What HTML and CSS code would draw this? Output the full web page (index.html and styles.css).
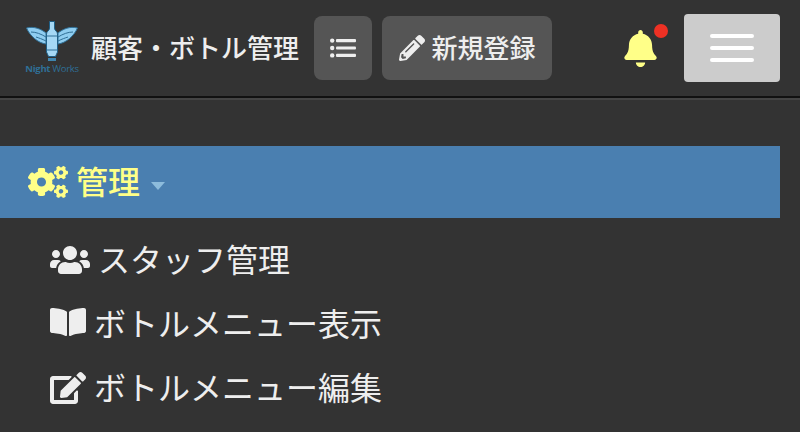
FILE: index.html
```html
<!DOCTYPE html>
<html lang="ja">
<head>
    <meta charset="UTF-8">
    <meta name="viewport" content="width=device-width, initial-scale=1.0">
    <title>顧客・ボトル管理</title>
    <link rel="stylesheet" href="styles.css">
</head>
<body>
    <header class="topbar">
        <div class="logo">
            <svg class="logo-mark" viewBox="0 0 52 41">
                <path class="wing" d="M.5 7 C8 5 15 8 20 12 L20 23 C12 22 4 15 .5 7 Z"/>
                <path class="wing" d="M51.5 7 C44 5 37 8 32 12 L32 23 C40 22 48 15 51.5 7 Z"/>
                <path class="wing-line" d="M5 11 C10 11 15 13 20 16 M10 16 C13 17 16 18 20 20 M47 11 C42 11 37 13 32 16 M42 16 C39 17 36 18 32 20"/>
                <path class="bottle" d="M23.5 .5 H28.5 V7 C28.5 10 31.5 10 31.5 13 V31 L29.5 35.5 H22.5 L20.5 31 V13 C20.5 10 23.5 10 23.5 7 Z"/>
                <path class="wing-line" d="M20.5 15 H31.5 M20.5 29 H31.5"/>
                <path class="bottle-foot" d="M22 37 H30 V40 H22 Z"/>
            </svg>
            <span class="logo-text"><b>Night</b> Works</span>
        </div>
        <h1 class="title">顧客・ボトル管理</h1>
        <a class="tool-btn tool-list" href="#">
            <svg class="icon-list" viewBox="0 0 26 20">
                <circle cx="2.2" cy="2.6" r="2.2"/><circle cx="2.2" cy="10" r="2.2"/><circle cx="2.2" cy="17.4" r="2.2"/>
                <rect x="6" y="1" width="20" height="3.2" rx="1"/><rect x="6" y="8.4" width="20" height="3.2" rx="1"/><rect x="6" y="15.8" width="20" height="3.2" rx="1"/>
            </svg>
        </a>
        <a class="tool-btn tool-new" href="#">
            <svg class="icon-pencil" viewBox="0 0 512 512"><path d="M497.9 142.1l-46.1 46.1c-4.7 4.7-12.3 4.7-17 0l-111-111c-4.7-4.7-4.7-12.3 0-17l46.1-46.1c18.7-18.7 49.1-18.7 67.9 0l60.1 60.1c18.8 18.7 18.8 49.1 0 67.9zM284.2 99.8L21.6 362.4.4 483.9c-2.9 16.4 11.4 30.6 27.8 27.7l121.5-21.3 262.6-262.6c4.7-4.7 4.7-12.3 0-17l-111-111c-4.8-4.7-12.4-4.7-17.1.1zM124.1 339.9c-5.5-5.5-5.5-14.3 0-19.8l154-154c5.5-5.5 14.3-5.5 19.8 0s5.5 14.3 0 19.8l-154 154c-5.5 5.5-14.3 5.5-19.8 0zM88 424h48v36.3l-64.5 11.3-31.1-31.1L51.7 376H88v48z"/></svg>
            <span class="label">新規登録</span>
        </a>
        <div class="bell">
            <svg class="icon-bell" viewBox="0 0 448 512"><path d="M224 512c35.32 0 63.97-28.65 63.97-64H160.03c0 35.35 28.65 64 63.97 64zm215.39-149.71c-19.32-20.76-55.47-51.99-55.47-154.29 0-77.7-54.48-139.9-127.94-155.16V32c0-17.67-14.32-32-31.98-32s-31.98 14.33-31.98 32v20.84C118.56 68.1 64.08 130.3 64.08 208c0 102.3-36.15 133.53-55.47 154.29-6 6.45-8.66 14.16-8.61 21.71.11 16.4 12.98 32 32.1 32h383.8c19.12 0 32-15.6 32.1-32 .05-7.55-2.61-15.27-8.61-21.71z"/></svg>
            <span class="bell-dot"></span>
        </div>
        <button class="burger" type="button">
            <span></span><span></span><span></span>
        </button>
    </header>

    <nav class="menu">
        <div class="menu-head">
            <svg class="icon-cogs" viewBox="0 0 640 512"><path d="M512.1 191l-8.2 14.3c-3 5.3-9.4 7.5-15.1 5.4-11.8-4.4-22.6-10.7-32.1-18.6-4.6-3.8-5.8-10.5-2.8-15.7l8.2-14.3c-6.9-8-12.3-17.3-15.9-27.4h-16.5c-6 0-11.2-4.3-12.2-10.3-2-12-2.1-24.6 0-37.1 1-6 6.2-10.4 12.2-10.4h16.5c3.6-10.1 9-19.4 15.9-27.4l-8.2-14.3c-3-5.2-1.9-11.9 2.8-15.7 9.5-7.9 20.4-14.2 32.1-18.6 5.7-2.1 12.1.1 15.1 5.4l8.2 14.3c10.5-1.9 21.2-1.9 31.7 0L552 6.3c3-5.3 9.4-7.5 15.1-5.4 11.8 4.4 22.6 10.7 32.1 18.6 4.6 3.8 5.8 10.5 2.8 15.7l-8.2 14.3c6.9 8 12.3 17.3 15.9 27.4h16.5c6 0 11.2 4.3 12.2 10.3 2 12 2.1 24.6 0 37.1-1 6-6.2 10.4-12.2 10.4h-16.5c-3.6 10.1-9 19.4-15.9 27.4l8.2 14.3c3 5.2 1.9 11.9-2.8 15.7-9.5 7.9-20.4 14.2-32.1 18.6-5.7 2.1-12.1-.1-15.1-5.4l-8.2-14.3c-10.4 1.9-21.2 1.9-31.7 0zm-10.5-58.8c38.5 29.6 82.4-14.3 52.8-52.8-38.5-29.7-82.4 14.3-52.8 52.8zM386.3 286.1l33.7 16.8c10.1 5.8 14.5 18.1 10.5 29.1-8.9 24.2-26.4 46.4-42.6 65.8-7.4 8.9-20.2 11.1-30.3 5.3l-29.1-16.8c-16 13.7-34.6 24.6-54.9 31.7v33.6c0 11.6-8.3 21.6-19.7 23.6-24.6 4.2-50.4 4.4-75.9 0-11.5-2-20-11.9-20-23.6V418c-20.3-7.2-38.9-18-54.9-31.7L74 403c-10 5.8-22.9 3.6-30.3-5.3-16.2-19.4-33.3-41.6-42.2-65.7-4-10.9.4-23.2 10.5-29.1l33.3-16.8c-3.9-20.9-3.9-42.4 0-63.4L12 205.8c-10.1-5.8-14.6-18.1-10.5-29 8.9-24.2 26-46.4 42.2-65.8 7.4-8.9 20.2-11.1 30.3-5.3l29.1 16.8c16-13.7 34.6-24.6 54.9-31.7V57.1c0-11.5 8.2-21.5 19.6-23.5 24.6-4.2 50.5-4.4 76-.1 11.5 2 20 11.9 20 23.6v33.6c20.3 7.2 38.9 18 54.9 31.7l29.1-16.8c10-5.8 22.9-3.6 30.3 5.3 16.2 19.4 33.2 41.6 42.1 65.8 4 10.9.1 23.2-10 29.1l-33.7 16.8c3.9 21 3.9 42.5 0 63.5zm-117.6 21.1c59.2-77-28.7-164.9-105.7-105.7-59.2 77 28.7 164.9 105.7 105.7zm243.4 182.7l-8.2 14.3c-3 5.3-9.4 7.5-15.1 5.4-11.8-4.4-22.6-10.7-32.1-18.6-4.6-3.8-5.8-10.5-2.8-15.7l8.2-14.3c-6.9-8-12.3-17.3-15.9-27.4h-16.5c-6 0-11.2-4.3-12.2-10.3-2-12-2.1-24.6 0-37.1 1-6 6.2-10.4 12.2-10.4h16.5c3.6-10.1 9-19.4 15.9-27.4l-8.2-14.3c-3-5.2-1.9-11.9 2.8-15.7 9.5-7.9 20.4-14.2 32.1-18.6 5.7-2.1 12.1.1 15.1 5.4l8.2 14.3c10.5-1.9 21.2-1.9 31.7 0l8.2-14.3c3-5.3 9.4-7.5 15.1-5.4 11.8 4.4 22.6 10.7 32.1 18.6 4.6 3.8 5.8 10.5 2.8 15.7l-8.2 14.3c6.9 8 12.3 17.3 15.9 27.4h16.5c6 0 11.2 4.3 12.2 10.3 2 12 2.1 24.6 0 37.1-1 6-6.2 10.4-12.2 10.4h-16.5c-3.6 10.1-9 19.4-15.9 27.4l8.2 14.3c3 5.2 1.9 11.9-2.8 15.7-9.5 7.9-20.4 14.2-32.1 18.6-5.7 2.1-12.1-.1-15.1-5.4l-8.2-14.3c-10.4 1.9-21.2 1.9-31.7 0zM501.6 431c38.5 29.6 82.4-14.3 52.8-52.8-38.5-29.6-82.4 14.3-52.8 52.8z"/></svg>
            <span class="label">管理</span>
            <span class="caret"></span>
        </div>
        <ul class="menu-list">
            <li class="menu-row">
                <svg class="icon-users" viewBox="0 0 640 512"><path d="M96 224c35.3 0 64-28.7 64-64s-28.7-64-64-64-64 28.7-64 64 28.7 64 64 64zm448 0c35.3 0 64-28.7 64-64s-28.7-64-64-64-64 28.7-64 64 28.7 64 64 64zm32 32h-64c-17.6 0-33.5 7.1-45.1 18.6 40.3 22.1 68.9 62 75.1 109.4h66c17.7 0 32-14.3 32-32v-32c0-35.3-28.7-64-64-64zm-256 0c61.9 0 112-50.1 112-112S381.9 32 320 32 208 82.1 208 144s50.1 112 112 112zm76.8 32h-8.3c-20.8 10-43.9 16-68.5 16s-47.6-6-68.5-16h-8.3C179.6 288 128 339.6 128 403.2V432c0 26.5 21.5 48 48 48h288c26.5 0 48-21.5 48-48v-28.8c0-63.6-51.6-115.2-115.2-115.2zm-223.7-13.4C161.5 263.1 145.6 256 128 256H64c-35.3 0-64 28.7-64 64v32c0 17.7 14.3 32 32 32h65.9c6.3-47.4 34.9-87.3 75.2-109.4z"/></svg>
                <span class="label">スタッフ管理</span>
            </li>
            <li class="menu-row">
                <svg class="icon-book" viewBox="0 0 576 512"><path d="M542.22 32.05c-54.8 3.11-163.72 14.43-230.96 55.59-4.64 2.84-7.27 7.89-7.27 13.17v363.87c0 11.55 12.63 18.85 23.28 13.49 69.18-34.82 169.23-44.32 218.7-46.92 16.89-.89 30.02-14.43 30.02-30.66V62.75c.01-17.71-15.35-31.74-33.77-30.7zM264.73 87.64C197.5 46.48 88.58 35.17 33.78 32.05 15.36 31.01 0 45.04 0 62.75V400.6c0 16.24 13.13 29.78 30.02 30.66 49.49 2.6 149.59 12.11 218.77 46.95 10.62 5.35 23.21-1.94 23.21-13.46V100.63c0-5.29-2.62-10.25-7.27-12.99z"/></svg>
                <span class="label">ボトルメニュー表示</span>
            </li>
            <li class="menu-row">
                <svg class="icon-edit" viewBox="0 0 576 512"><path d="M402.6 83.2l90.2 90.2c3.8 3.8 3.8 10 0 13.8L274.4 405.6l-92.8 10.3c-12.4 1.4-22.9-9.1-21.5-21.5l10.3-92.8L388.8 83.2c3.8-3.8 10-3.8 13.8 0zm162-22.9l-48.8-48.8c-15.2-15.2-39.9-15.2-55.2 0l-35.4 35.4c-3.8 3.8-3.8 10 0 13.8l90.2 90.2c3.8 3.8 10 3.8 13.8 0l35.4-35.4c15.2-15.3 15.2-40 0-55.2zM384 346.2V448H64V128h229.8c3.2 0 6.2-1.3 8.5-3.5l40-40c7.6-7.6 2.2-20.5-8.5-20.5H48C21.5 64 0 85.5 0 112v352c0 26.5 21.5 48 48 48h352c26.5 0 48-21.5 48-48V306.2c0-10.7-12.9-16-20.5-8.5l-40 40c-2.2 2.3-3.5 5.3-3.5 8.5z"/></svg>
                <span class="label">ボトルメニュー編集</span>
            </li>
        </ul>
    </nav>
</body>
</html>
```

FILE: styles.css
```css
/* base */
html, body { height: 100%; }

body {
    margin: 0;
    overflow: hidden;
    background: #333333;
    color: #eeeeee;
    font-family: "Noto Sans CJK JP", "Noto Sans", sans-serif;
}

svg { display: block; fill: currentColor; }

/* the CJK font sits low in its line box, lift the labels back up */
.label { margin-bottom: 4px; }

/* top bar */
.topbar {
    display: flex;
    align-items: center;
    height: 96px;
    padding: 0 20px 0 26px;
    border-bottom: 2px solid #111111;
    box-shadow: 0 2px 0 #444444;
}

.logo {
    display: flex;
    flex-direction: column;
    align-items: center;
    width: 52px;
}
.logo-mark { width: 52px; height: 41px; }
.logo-text {
    margin-top: 1px;
    color: #2f6f96;
    font-family: "Open Sans", sans-serif;
    font-size: 9.5px;
    line-height: 12px;
    letter-spacing: -0.3px;
    white-space: nowrap;
}

.wing { fill: #8fcdf0; stroke: #2f6f96; stroke-width: 1; }
.wing-line { fill: none; stroke: #2f6f96; stroke-width: 1; }
.bottle { fill: #a5d8f5; stroke: #1f5f86; stroke-width: 1; }
.bottle-foot { fill: #3f86b0; }

.title {
    margin: 0 15px 3px 13px;
    font-size: 26px;
    font-weight: 500;
    line-height: 36px;
    white-space: nowrap;
}

.tool-btn {
    display: flex;
    align-items: center;
    justify-content: center;
    height: 64px;
    border-radius: 8px;
    background: #555555;
    color: #eeeeee;
    font-size: 26px;
    font-weight: 500;
    text-decoration: none;
}
.tool-list { width: 58px; margin-right: 10px; }
.tool-new { width: 170px; gap: 7px; }
.icon-list { width: 26px; height: 20px; }
.icon-pencil { width: 26px; height: 26px; }

.bell {
    position: relative;
    margin-left: 72px;
    color: #ffff88;
}
.icon-bell { width: 33px; height: 37px; }
.bell-dot {
    position: absolute;
    top: -6px;
    right: -11px;
    width: 14px;
    height: 14px;
    border-radius: 50%;
    background: #ee3124;
}

.burger {
    display: flex;
    flex-direction: column;
    align-items: center;
    justify-content: center;
    gap: 8px;
    width: 96px;
    height: 68px;
    margin-left: 27px;
    padding: 0;
    border: none;
    border-radius: 4px;
    background: #cccccc;
}
.burger span {
    display: block;
    width: 44px;
    height: 4px;
    border-radius: 2px;
    background: #ffffff;
}

/* menu */
.menu { width: 780px; margin-top: 48px; }

.menu-head {
    display: flex;
    align-items: center;
    height: 72px;
    padding-left: 28px;
    background: #4a7fb0;
    color: #ffff88;
    font-size: 32px;
    font-weight: 500;
}
.icon-cogs { width: 40px; height: 32px; margin-right: 9px; margin-left: 0; flex: none; }
.menu-head .label { margin-left: -1px; }
.caret {
    width: 0;
    height: 0;
    margin: 8px 0 0 11px;
    border-top: 8px solid #8dbcdc;
    border-left: 7.5px solid transparent;
    border-right: 7.5px solid transparent;
}

.menu-list {
    margin: 10px 0 0;
    padding: 0 0 0 50px;
    list-style: none;
}
.menu-row {
    display: flex;
    align-items: center;
    height: 64px;
    font-size: 32px;
    white-space: nowrap;
}
.icon-users { width: 40px; height: 32px; margin-right: 8px; }
.icon-book { width: 36px; height: 32px; margin-right: 8px; margin-bottom: 4px; }
.icon-edit { width: 36px; height: 32px; margin-right: 8px; }
```
